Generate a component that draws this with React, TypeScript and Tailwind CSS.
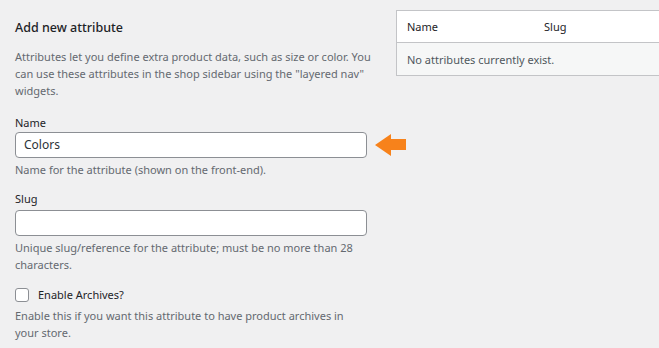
import React from "react";

const font = { fontFamily: '"Noto Sans", "Open Sans", sans-serif' };

export default function App() {
  return (
    <div
      className="flex h-[348px] w-[659px] overflow-hidden bg-[#f0f0f1] text-[#1d2327]"
      style={font}
    >
      <div className="w-[396px] shrink-0 pl-[15px] pr-[6px] pt-[19px]">
        <h2 className="text-[12.5px] leading-[18px] font-medium text-[#1d2327]">Add new attribute</h2>
        <p className="mt-[11px] text-[11px] leading-[17px] text-[#646970]">
          Attributes let you define extra product data, such as size or color. You
          <br />
          can use these attributes in the shop sidebar using the "layered nav"
          <br />
          widgets.
        </p>

        <label className="mt-[15px] block text-[11px] leading-[17px] text-[#1d2327]">Name</label>
        <div className="mt-[1px] flex w-max items-center gap-[8px]">
          <div className="flex h-[26px] w-[352px] shrink-0 items-center rounded-[4px] border border-[#8c8f94] bg-white px-[8px] text-[12px] text-[#2c3338]">
            Colors
          </div>
          <svg width="31" height="22" viewBox="0 0 31 22" className="shrink-0">
            <polygon points="0,11 16,0 16,5 31,5 31,16 16,16 16,22" fill="#f7821b" />
          </svg>
        </div>
        <p className="mt-[3px] text-[11px] leading-[17px] text-[#646970]">
          Name for the attribute (shown on the front-end).
        </p>

        <label className="mt-[12px] block text-[11px] leading-[17px] text-[#1d2327]">Slug</label>
        <div className="mt-[3px] h-[26px] w-[352px] rounded-[4px] border border-[#8c8f94] bg-white" />
        <p className="mt-[3px] text-[11px] leading-[17px] text-[#646970]">
          Unique slug/reference for the attribute; must be no more than 28
          <br />
          characters.
        </p>

        <label className="mt-[13px] flex items-center gap-[9px] text-[11px] leading-[17px] text-[#1d2327]">
          <span className="h-[14px] w-[14px] rounded-[3px] border border-[#8c8f94] bg-white" />
          Enable Archives?
        </label>
        <p className="mt-[4px] text-[11px] leading-[17px] text-[#646970]">
          Enable this if you want this attribute to have product archives in
          <br />
          your store.
        </p>
      </div>

      <div className="pt-[10px]">
        <div className="w-[300px] border border-[#c3c4c7] bg-white text-[11px] leading-[17px]">
          <div className="flex h-[32px] items-center border-b border-[#c3c4c7] pl-[10px] text-[#1d2327]">
            <span className="w-[137px]">Name</span>
            <span>Slug</span>
          </div>
          <div className="flex h-[32px] items-center bg-[#f6f7f7] pl-[10px] text-[#50575e]">
            No attributes currently exist.
          </div>
        </div>
      </div>
    </div>
  );
}
